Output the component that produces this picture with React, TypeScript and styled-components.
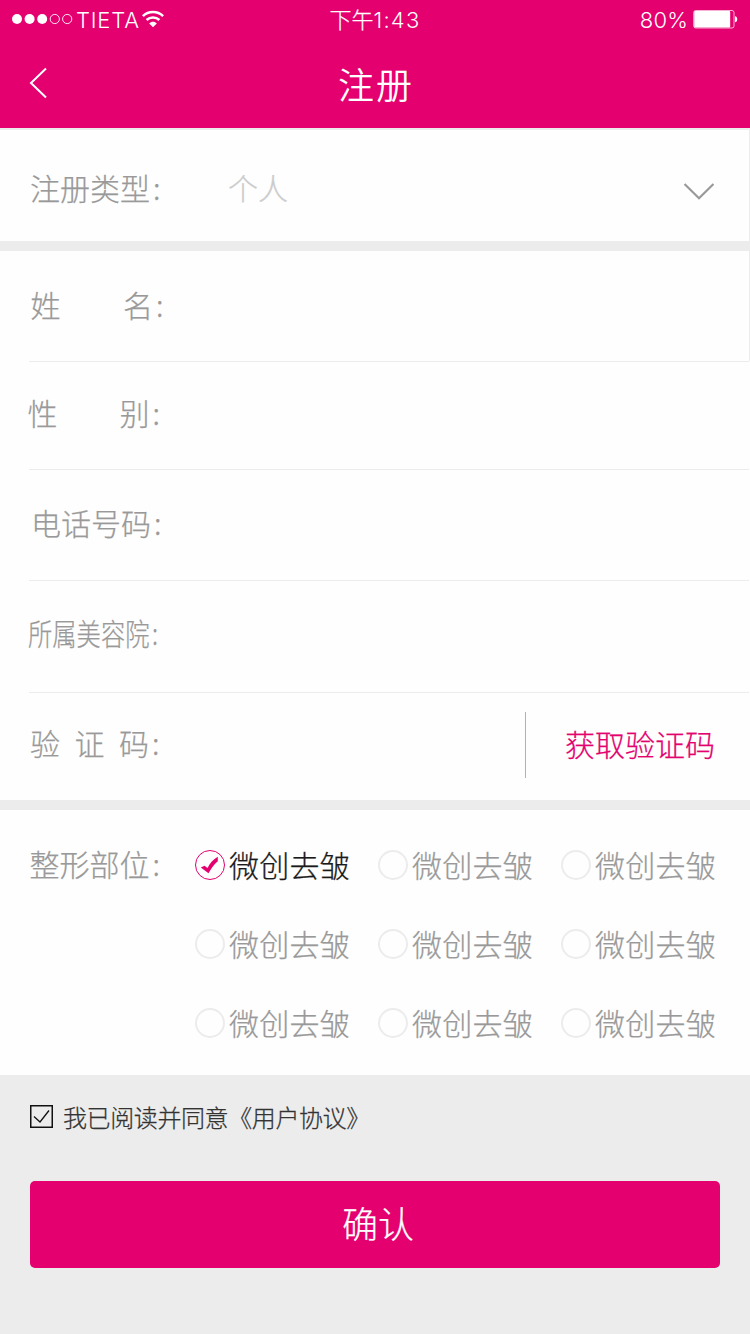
import React, { useState } from "react";
import styled, { createGlobalStyle } from "styled-components";

const pink = "#e4006f";
const line = "#ececec";
const grey = "#999999";

const GlobalStyle = createGlobalStyle`
  * { box-sizing: border-box; }
  body {
    margin: 0;
    background: ${line};
    font-family: "Noto Sans CJK SC", sans-serif;
    font-weight: 300;
    -webkit-text-stroke-width: 0.25px;
  }
  button { font: inherit; border: 0; background: none; padding: 0; cursor: pointer; }
`;

const Page = styled.div`
  width: 750px;
  height: 1334px;
  display: flex;
  flex-direction: column;
  background: ${line};
  overflow: hidden;
`;

const Header = styled.header`
  height: 128px;
  background: ${pink};
  color: #fff;
`;

const StatusBar = styled.div`
  height: 40px;
  display: grid;
  grid-template-columns: 1fr auto 1fr;
  align-items: center;
  padding: 0 12px;
  font-size: 22px;
  line-height: 40px;
`;

const StatusGroup = styled.div<{ $end?: boolean }>`
  display: flex;
  align-items: center;
  height: 38px;
  margin-bottom: 2px;
  justify-content: ${(p) => (p.$end ? "flex-end" : "flex-start")};
`;

const Latin = styled.span<{ $spacing: number }>`
  font-family: Inter, sans-serif;
  font-weight: 300;
  -webkit-text-stroke-width: 0;
  font-feature-settings: "calt" 0;
  letter-spacing: ${(p) => p.$spacing}px;
`;

const Carrier = styled(Latin)`
  margin: 2px 2px 0 3px;
`;

const Charge = styled(Latin)`
  margin: 2px 5px 0 0;
`;

const Clock = styled.span`
  height: 40px;
  line-height: 36px;
`;

const NavBar = styled.div`
  height: 88px;
  display: grid;
  grid-template-columns: 100px 1fr 100px;
  align-items: center;
`;

const BackButton = styled.button`
  display: flex;
  padding: 0 0 2px 29px;
`;

const Title = styled.h1`
  margin: 0;
  padding: 0 0 2px 2px;
  text-align: center;
  font-size: 36px;
  line-height: 40px;
  font-weight: 350;
  -webkit-text-stroke-width: 0;
  letter-spacing: 2px;
`;

const Section = styled.section<{ $gap: number; $edge?: boolean }>`
  margin-top: ${(p) => p.$gap}px;
  background: #fefefe;
  border-right: ${(p) => (p.$edge ? `1px solid ${line}` : "0")};
`;

const Row = styled.div<{ $height: number; $top?: number; $bottom?: number; $edge?: boolean }>`
  height: ${(p) => p.$height}px;
  display: flex;
  align-items: center;
  padding: ${(p) => p.$top ?? 0}px 35px ${(p) => p.$bottom ?? 0}px 0;
  border-right: ${(p) => (p.$edge ? `1px solid ${line}` : "0")};
`;

const Divider = styled.hr`
  height: 1px;
  margin: 0 1px 0 29px;
  border: 0;
  background: ${line};
`;

const Label = styled.span<{ $start: number; $gap?: number; $narrow?: boolean; $lift?: number }>`
  display: flex;
  gap: ${(p) => p.$gap ?? 0}px;
  margin-left: ${(p) => p.$start}px;
  padding-bottom: ${(p) => p.$lift ?? 0}px;
  font-size: 30px;
  line-height: 40px;
  color: ${grey};
  white-space: nowrap;
  transform: ${(p) => (p.$narrow ? "scaleX(0.81)" : "none")};
  transform-origin: left;
`;

const Colon = styled.span`
  margin-left: 3px;
`;

const TypeValue = styled.span`
  margin-left: 67px;
  flex: 1;
  font-size: 30px;
  line-height: 40px;
  color: #cccccc;
`;

const Chevron = styled.svg`
  margin-top: 9px;
`;

const LabelSlot = styled.div<{ $width: number }>`
  width: ${(p) => p.$width}px;
`;

const CodeButton = styled.button`
  height: 66px;
  margin-left: auto;
  padding: 0 0 5px 39px;
  border-left: 1px solid #b2b2b2;
  color: ${pink};
  font-size: 30px;
  line-height: 40px;
`;

const Parts = styled.div`
  height: 265px;
  display: flex;
  align-items: flex-start;
  padding-top: 35px;
`;

const PartLabel = styled.div`
  width: 195px;
  height: 40px;
  line-height: 37px;
  padding-left: 29.5px;
  font-size: 30px;
  color: ${grey};
`;

const PartGrid = styled.div`
  display: grid;
  grid-template-columns: repeat(3, 183px);
  grid-auto-rows: 79px;
`;

const Option = styled.button<{ $on: boolean }>`
  display: flex;
  align-items: center;
  gap: 4px;
  height: 40px;
  font-size: 30px;
  white-space: nowrap;
  color: ${(p) => (p.$on ? "#1a1a1a" : grey)};
`;

const OptionText = styled.span`
  line-height: 38px;
  padding-bottom: 2px;
  letter-spacing: 0.2px;
`;

const Radio = styled.span<{ $on: boolean }>`
  flex: none;
  width: 30px;
  height: 30px;
  display: flex;
  align-items: center;
  justify-content: center;
  border-radius: 50%;
  border: ${(p) => (p.$on ? `1px solid ${pink}` : `2px solid ${line}`)};
`;

const Footer = styled.footer`
  padding: 25px 30px 0;
`;

const Agreement = styled.button`
  display: flex;
  align-items: center;
  gap: 10px;
  height: 33px;
  font-size: 24px;
  line-height: 32px;
  letter-spacing: -0.4px;
  color: #333;
`;

const Submit = styled.button`
  display: block;
  width: 690px;
  height: 87px;
  margin-top: 48px;
  padding: 0 0 4px 6px;
  border-radius: 5px;
  background: ${pink};
  color: #fff;
  font-size: 36px;
  line-height: 83px;
`;

const Signal = () => (
  <svg width="61" height="12" viewBox="0 0 61 12">
    {[5, 17.6, 30.2].map((x) => (
      <circle key={x} cx={x} cy="6" r="5" fill="#fff" />
    ))}
    {[42.8, 55.2].map((x) => (
      <circle key={x} cx={x} cy="6" r="4.6" fill="none" stroke="#fff" strokeWidth="0.9" />
    ))}
  </svg>
);

const Wifi = () => (
  <svg width="22" height="18" viewBox="0 0 22 18" fill="none" stroke="#fff" strokeWidth="2.5">
    <path d="M0.9 6.1C6.5 0.6 15.5 0.6 21.1 6.1" />
    <path d="M4.6 10C8.2 6.5 13.8 6.5 17.4 10" />
    <path d="M7.2 13.4C9.4 11.3 12.6 11.3 14.8 13.4L11 17.2Z" fill="#fff" stroke="none" />
  </svg>
);

const BatteryIcon = () => (
  <svg width="45" height="20" viewBox="0 0 45 20">
    <rect x="0.7" y="1.5" width="40.3" height="17.5" rx="2" fill="none" stroke="#fff" strokeOpacity="0.7" />
    <rect x="1.2" y="2" width="36" height="16.5" rx="1" fill="#fff" />
    <path d="M42 7.2C45 7.6 45 12.8 42 13.2Z" fill="#fff" />
  </svg>
);

const fields = [
  { parts: ["姓", "名"], start: 30.5, gap: 62.5, height: 110, bottom: 4 },
  { parts: ["性", "别"], start: 27.5, gap: 62, height: 107, bottom: 7 },
  { parts: ["电话号码"], start: 31, gap: 0, height: 110, bottom: 6 },
  { parts: ["所属美容院"], start: 27.5, gap: 0, height: 111, bottom: 9, narrow: true },
];

export default function App() {
  const [part, setPart] = useState(0);
  return (
    <Page>
      <GlobalStyle />
      <Header>
        <StatusBar>
          <StatusGroup>
            <Signal />
            <Carrier $spacing={0.8}>TIETA</Carrier>
            <Wifi />
          </StatusGroup>
          <Clock>
            下午<Latin $spacing={1.2}>1:43</Latin>
          </Clock>
          <StatusGroup $end>
            <Charge $spacing={0.2}>80%</Charge>
            <BatteryIcon />
          </StatusGroup>
        </StatusBar>
        <NavBar>
          <BackButton aria-label="返回">
            <svg width="20" height="32" viewBox="0 0 20 32" fill="none" stroke="#fff" strokeWidth="2">
              <path d="M17 1.5L2 16L17 30.5" />
            </svg>
          </BackButton>
          <Title>注册</Title>
        </NavBar>
      </Header>

      <Section $gap={2} $edge>
        <Row $height={111} $top={3}>
          <LabelSlot $width={161}>
            <Label $start={30}>
              <span>
                注册类型<Colon>:</Colon>
              </span>
            </Label>
          </LabelSlot>
          <TypeValue>个人</TypeValue>
          <Chevron width="30" height="17" viewBox="0 0 30 17" fill="none" stroke={grey} strokeWidth="2.2">
            <path d="M0.5 1L15 15.3L29.5 1" />
          </Chevron>
        </Row>
      </Section>

      <Section $gap={10}>
        {fields.map((f, row) => (
          <React.Fragment key={f.parts[0]}>
            <Row $height={f.height} $bottom={f.bottom} $edge={row === 0}>
              <Label $start={f.start} $gap={f.gap} $narrow={f.narrow}>
                {f.parts.map((t, i) => (
                  <span key={t}>
                    {t}
                    {i === f.parts.length - 1 && <Colon>:</Colon>}
                  </span>
                ))}
              </Label>
            </Row>
            <Divider />
          </React.Fragment>
        ))}
        <Row $height={107} $bottom={3}>
          <Label $start={30} $gap={14.5} $lift={7}>
            <span>验</span>
            <span>证</span>
            <span>
              码<Colon>:</Colon>
            </span>
          </Label>
          <CodeButton>获取验证码</CodeButton>
        </Row>
      </Section>

      <Section $gap={10}>
        <Parts>
          <PartLabel>
            整形部位<Colon>:</Colon>
          </PartLabel>
          <PartGrid>
            {Array.from({ length: 9 }, (_, i) => (
              <Option key={i} $on={part === i} onClick={() => setPart(i)}>
                <Radio $on={part === i}>
                  {part === i && (
                    <svg width="20" height="18" viewBox="0 0 20 18" fill={pink}>
                      <path d="M0.8 11.5L4.5 9.8L7.5 12C10 7 13 3.5 17.8 0.8V5.2C14 8.5 11 12.5 8.5 17.3Z" />
                    </svg>
                  )}
                </Radio>
                <OptionText>微创去皱</OptionText>
              </Option>
            ))}
          </PartGrid>
        </Parts>
      </Section>

      <Footer>
        <Agreement>
          <svg width="23" height="23" viewBox="0 0 23 23" fill="none" stroke="#111">
            <rect x="0.75" y="0.75" width="21.5" height="21.5" strokeWidth="1.5" />
            <path d="M4 11.5L10 17L19 5.5" strokeWidth="1.3" />
          </svg>
          我已阅读并同意《用户协议》
        </Agreement>
        <Submit>确认</Submit>
      </Footer>
    </Page>
  );
}
